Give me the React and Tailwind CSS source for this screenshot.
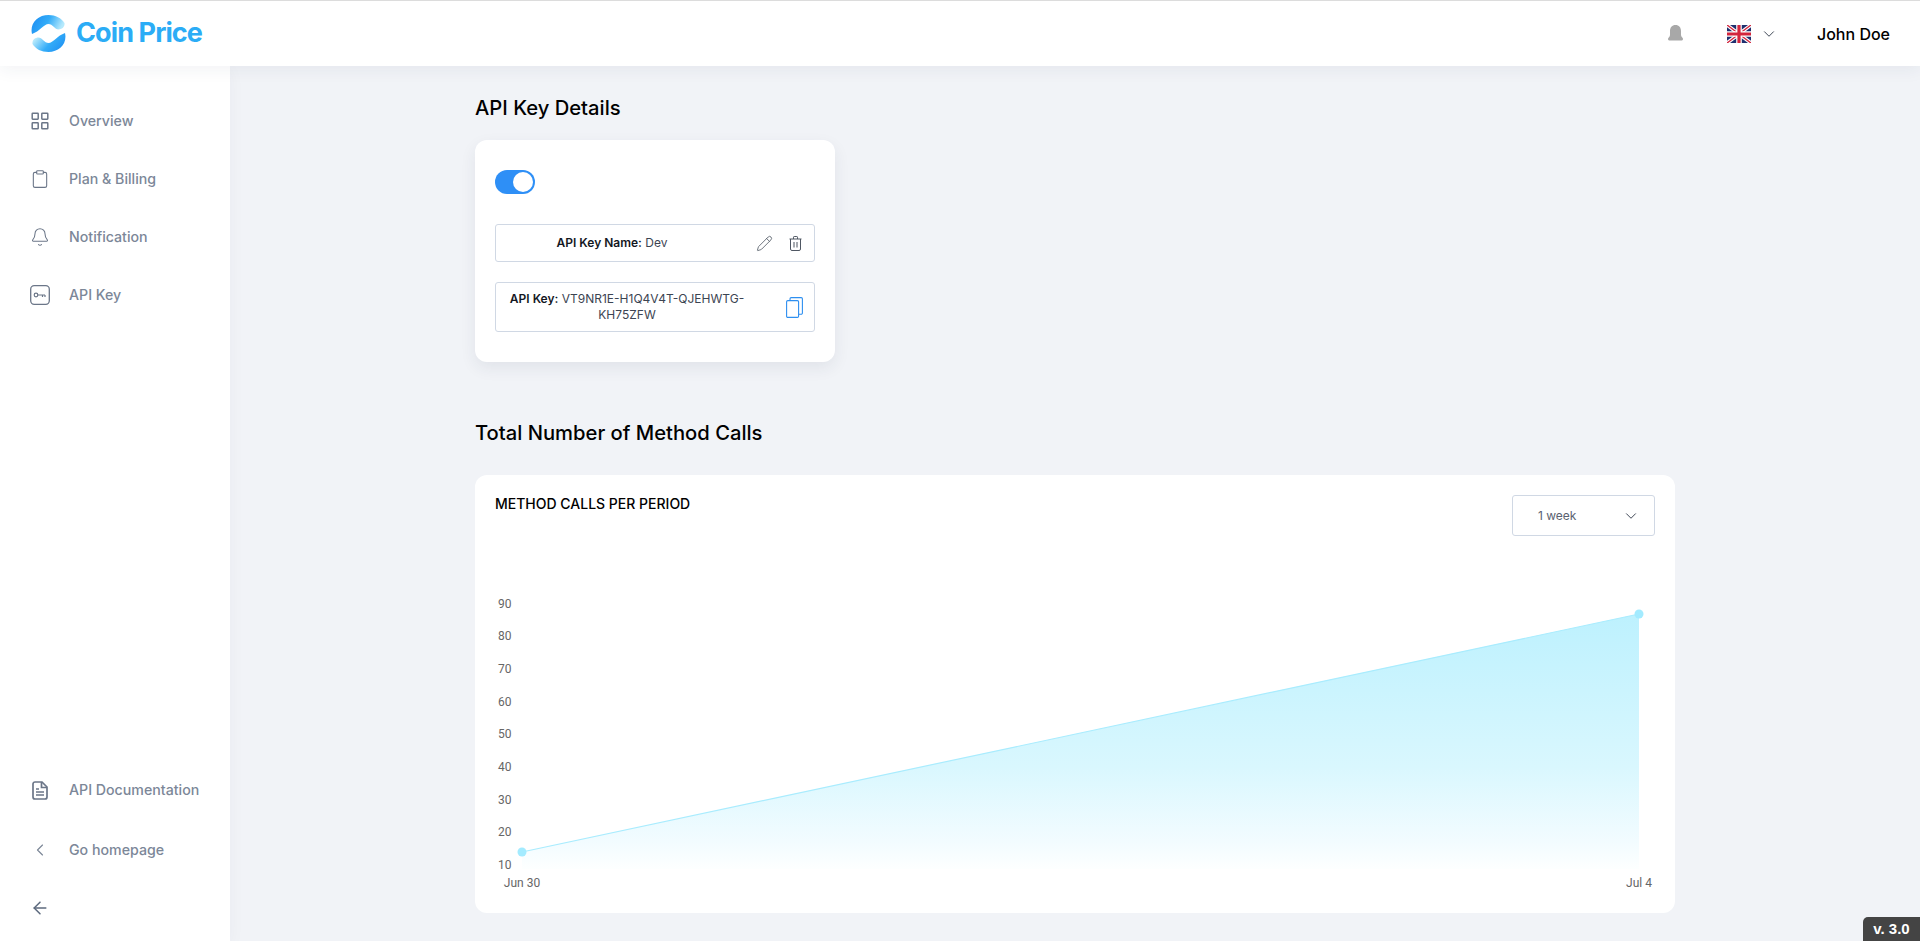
import React from "react";
import { Clipboard, Bell, ChevronLeft, ArrowLeft, ChevronDown, Pencil } from "lucide-react";

const font = { fontFamily: "Inter, 'Noto Sans', sans-serif" };

function Logo() {
  return (
    <svg width="35" height="37" viewBox="0 0 35 37">
      <defs>
        <linearGradient id="lg1" x1="0" y1="0" x2="1" y2="0.3">
          <stop offset="0" stopColor="#1b8bf2" />
          <stop offset="0.55" stopColor="#33acf8" />
          <stop offset="1" stopColor="#b5e9fc" />
        </linearGradient>
        <linearGradient id="lg2" x1="1" y1="1" x2="0" y2="0.5">
          <stop offset="0" stopColor="#1b8bf2" />
          <stop offset="0.55" stopColor="#33acf8" />
          <stop offset="1" stopColor="#b5e9fc" />
        </linearGradient>
      </defs>
      <path d="M1 19 C-1.5 8 7 0 17.5 0 C24.5 0 30.5 3 33.5 8 C34 12 31 14.5 27.5 14.5 C24 14.5 21.5 9 17.5 9 C13 9 8.5 16.5 1 19 Z" fill="url(#lg1)" />
      <path d="M34 18 C36.5 29 28 37 17.5 37 C10.5 37 4.5 34 1.5 29 C1 25 4 22.5 7.5 22.5 C11 22.5 13.5 28 17.5 28 C22 28 26.5 20.5 34 18 Z" fill="url(#lg2)" />
    </svg>
  );
}

function Flag() {
  return (
    <svg width="24" height="18" viewBox="0 0 60 45">
      <rect width="60" height="45" fill="#1f2f6e" />
      <path d="M0 0 L60 45 M60 0 L0 45" stroke="#fff" strokeWidth="9" />
      <path d="M0 0 L60 45 M60 0 L0 45" stroke="#d3243c" strokeWidth="3.5" />
      <path d="M30 0 V45 M0 22.5 H60" stroke="#fff" strokeWidth="14" />
      <path d="M30 0 V45 M0 22.5 H60" stroke="#d3243c" strokeWidth="8" />
    </svg>
  );
}

const GridIcon = () => (
  <svg width="18" height="18" viewBox="0 0 18 18" fill="none" stroke="#6b7688" strokeWidth="1.5">
    <rect x="1.2" y="1.2" width="6" height="6" rx="0.6" />
    <rect x="10.8" y="1.2" width="6" height="6" rx="0.6" />
    <rect x="1.2" y="10.8" width="6" height="6" rx="0.6" />
    <rect x="10.8" y="10.8" width="6" height="6" rx="0.6" />
  </svg>
);

const KeyIcon = () => (
  <svg width="20" height="20" viewBox="0 0 20 20" fill="none" stroke="#6b7688">
    <rect x="0.7" y="0.7" width="18.6" height="18.6" rx="3.5" strokeWidth="1.3" />
    <circle cx="6" cy="10" r="1.8" strokeWidth="1.2" />
    <path d="M7.8 10 H15 M12.5 10 V12 M15 10 V12" strokeWidth="1.2" />
  </svg>
);

const DocIcon = () => (
  <svg width="16" height="19" viewBox="0 0 16 19" fill="none" stroke="#6b7688" strokeWidth="1.7">
    <path d="M3 1 H10 L15 6 V16 A2 2 0 0 1 13 18 H3 A2 2 0 0 1 1 16 V3 A2 2 0 0 1 3 1 Z" />
    <path d="M9.5 1 V6.5 H15" />
    <path d="M4 8 H7 M4 11 H12 M4 14 H12" />
  </svg>
);

const TrashIcon = () => (
  <svg width="13" height="15" viewBox="0 0 13 15" fill="none" stroke="#4f5763" strokeWidth="1">
    <path d="M0.5 3 H12.5 M4.5 3 V1.2 A0.7 0.7 0 0 1 5.2 0.5 H7.8 A0.7 0.7 0 0 1 8.5 1.2 V3" />
    <path d="M1.5 3 V13 A1.5 1.5 0 0 0 3 14.5 H10 A1.5 1.5 0 0 0 11.5 13 V3" />
    <path d="M5 6 V11.5 M8 6 V11.5" />
  </svg>
);

const CopyIcon = () => (
  <svg width="17" height="21" viewBox="0 0 17 21" fill="none" stroke="#2e8ff0" strokeWidth="1.1">
    <rect x="0.6" y="3.6" width="12" height="16.8" rx="1.2" />
    <path d="M4 3.4 V1.8 A1.2 1.2 0 0 1 5.2 0.6 H15.2 A1.2 1.2 0 0 1 16.4 1.8 V16 A1.2 1.2 0 0 1 15.2 17.2 H12.8" />
  </svg>
);

function NavItem({ icon, label, className = "" }) {
  return (
    <div className={`flex items-center h-[24px] ${className}`}>
      <div className="w-[69px] pl-[30px] flex">
        <div className="w-[20px] flex justify-center">{icon}</div>
      </div>
      {label && <span className="text-[14.2px] font-medium text-[#7c8798]">{label}</span>}
    </div>
  );
}

function Chart() {
  const ys = [
    ["90", 603.5],
    ["80", 636],
    ["70", 668.5],
    ["60", 701.5],
    ["50", 734],
    ["40", 766.5],
    ["30", 799.5],
    ["20", 831.5],
    ["10", 864.5],
  ];
  const ox = 475;
  const oy = 475;
  return (
    <svg className="absolute left-0 top-0" width="1200" height="438" viewBox="0 0 1200 438" style={{ fontFamily: "Roboto, sans-serif" }}>
      <defs>
        <linearGradient id="area" x1="0" y1="0" x2="0" y2="1">
          <stop offset="0" stopColor="#bdf1fe" />
          <stop offset="0.6" stopColor="#d9f7fe" />
          <stop offset="0.9" stopColor="#f3fcff" />
          <stop offset="1" stopColor="#fdffff" />
        </linearGradient>
      </defs>
      <path d={`M${522 - ox} ${852 - oy} L${1639 - ox} ${614 - oy} V${869 - oy} H${522 - ox} Z`} fill="url(#area)" />
      <path d={`M${522 - ox} ${852 - oy} L${1639 - ox} ${614 - oy}`} stroke="#a9ecfe" strokeWidth="1.2" fill="none" />
      <circle cx={522 - ox} cy={852 - oy} r="4.5" fill="#a3ebff" />
      <circle cx={1639 - ox} cy={614 - oy} r="4.5" fill="#a3ebff" />
      {ys.map(([t, y]) => (
        <text key={t} x={511.5 - ox} y={y - oy + 4} textAnchor="end" fontSize="12" fill="#666">
          {t}
        </text>
      ))}
      <text x={522 - ox} y={886.5 - oy} textAnchor="middle" fontSize="12" fill="#666">Jun 30</text>
      <text x={1639 - ox} y={886.5 - oy} textAnchor="middle" fontSize="12" fill="#666">Jul 4</text>
    </svg>
  );
}

export default function App() {
  return (
    <div className="h-screen flex flex-col overflow-hidden bg-[#f1f3f7] relative" style={font}>
      <header className="h-[66px] shrink-0 bg-white border-t border-[#dcdcdc] flex items-center relative z-20 shadow-[0_4px_16px_rgba(40,50,80,0.06)]">
        <div className="pl-[31px] flex items-center">
          <Logo />
          <span className="ml-[10px] text-[27px] font-bold tracking-[-0.9px] text-[#2bacf6]">Coin Price</span>
        </div>
        <div className="ml-auto flex items-center pr-[30px]">
          <svg width="15" height="17" viewBox="0 0 15 17">
            <path d="M7.5 0 C11 0 13 2.6 13 6 V10 C13 12 15 12.5 15 14 C15 15.2 14 15.5 13 15.5 H2 C1 15.5 0 15.2 0 14 C0 12.5 2 12 2 10 V6 C2 2.6 4 0 7.5 0 Z" fill="#a8a8a8" />
          </svg>
          <div className="ml-[44px]"><Flag /></div>
          <ChevronDown className="ml-[9px]" color="#3c4452" size={18} strokeWidth={1.3} />
          <span className="ml-[39px] pt-[1px] text-[16px] font-medium text-black">John Doe</span>
        </div>
      </header>

      <div className="flex-1 flex min-h-0">
        <aside className="w-[230px] shrink-0 bg-white flex flex-col pt-[43px] pb-[21px] shadow-[0_4px_16px_rgba(40,50,80,0.04)]">
          <div className="flex flex-col gap-[34px]">
            <NavItem icon={<GridIcon />} label="Overview" />
            <NavItem icon={<Clipboard size={22} strokeWidth={1.3} color="#6b7688" />} label="Plan & Billing" />
            <NavItem icon={<Bell size={22} strokeWidth={1.25} color="#6b7688" />} label="Notification" />
            <NavItem icon={<KeyIcon />} label="API Key" />
          </div>
          <div className="mt-auto flex flex-col">
            <NavItem icon={<DocIcon />} label="API Documentation" />
            <NavItem className="mt-[36px]" icon={<ChevronLeft size={24} strokeWidth={1.4} color="#7c8798" />} label="Go homepage" />
            <NavItem className="mt-[34px]" icon={<ArrowLeft size={24} strokeWidth={1.8} color="#5d6a7e" />} />
          </div>
        </aside>

        <main className="flex-1 min-w-0 flex justify-center">
          <div className="w-[1200px] pt-[29px]">
            <h2 className="text-[20.2px] leading-[26px] font-medium text-black">API Key Details</h2>
            <section className="mt-[19px] w-[360px] h-[222px] bg-white rounded-[12px] px-[20px] pt-[30px] shadow-[0_6px_16px_rgba(40,50,80,0.08)]">
              <div className="w-[40px] h-[24px] rounded-full bg-[#2e8ff6] flex justify-end items-center pr-[2px]">
                <div className="w-[20px] h-[20px] rounded-full bg-white" />
              </div>
              <div className="mt-[30px] h-[38px] border border-[#d0d8e4] rounded-[3px] flex items-center text-[12px] text-[#3c4452]">
                <div className="flex-1 text-center pr-[28px]">
                  <span className="font-semibold text-[#14181f]">API Key Name:</span> Dev
                </div>
                <div className="flex items-center gap-[16px] pr-[12px]">
                  <Pencil size={17} strokeWidth={1.15} color="#4f5763" />
                  <TrashIcon />
                </div>
              </div>
              <div className="mt-[20px] h-[50px] border border-[#d0d8e4] rounded-[3px] flex items-center text-[12px] leading-[16px] text-[#3c4452]">
                <div className="w-[262px] text-center">
                  <span className="font-semibold text-[#14181f]">API Key:</span> VT9NR1E-H1Q4V4T-QJEHWTG-KH75ZFW
                </div>
                <div className="ml-auto pr-[11px] flex"><CopyIcon /></div>
              </div>
            </section>

            <h2 className="mt-[58px] text-[20.2px] leading-[26px] font-medium text-black">Total Number of Method Calls</h2>
            <section className="mt-[29px] relative h-[438px] bg-white rounded-[12px] px-[20px] pt-[20px] flex justify-between items-start">
              <Chart />
              <div className="text-[14px] leading-[18px] font-medium text-black relative">METHOD CALLS PER PERIOD</div>
              <div className="relative w-[143px] h-[41px] border border-[#d0d8e4] rounded-[3px] flex items-center justify-between pl-[25px] pr-[14px] text-[12px] text-[#5a6270] bg-white">
                <span>1 week</span>
                <ChevronDown size={18} strokeWidth={1.3} color="#3c4452" />
              </div>
            </section>
          </div>
        </main>
      </div>

      <div className="absolute right-0 bottom-0 h-[24px] w-[57px] bg-[#444444] rounded-tl-[5px] flex items-center justify-center text-[15px] font-bold text-white z-30" style={{ fontFamily: "'Liberation Sans', sans-serif" }}>
        v. 3.0
      </div>
    </div>
  );
}
